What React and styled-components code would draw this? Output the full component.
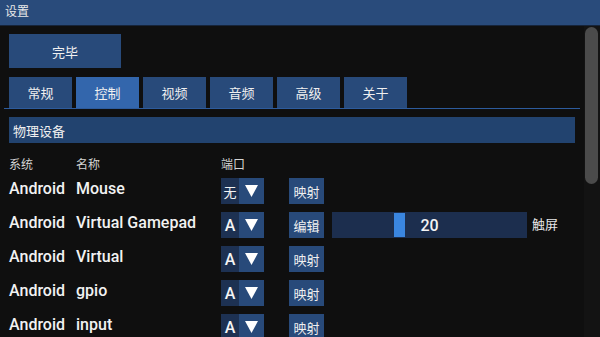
import React from "react";
import styled, { createGlobalStyle } from "styled-components";

const GlobalStyle = createGlobalStyle`
  html, body { margin: 0; padding: 0; background: #0f0f0f; }
  body { font-family: Roboto, "Noto Sans CJK SC", sans-serif; color: #eeeeee; }
`;

const Page = styled.div`
  width: 600px;
  height: 337px;
  overflow: hidden;
  display: flex;
  flex-direction: column;
  background: #0f0f0f;
`;

const TitleBar = styled.div`
  height: 25px;
  flex: none;
  background: #294b7b;
  border-bottom: 1px solid #16243a;
  padding-left: 5px;
  font-size: 12px;
  line-height: 25px;
  color: #e8e8e8;
`;

const Body = styled.div`
  flex: 1;
  display: flex;
  min-height: 0;
  overflow: hidden;
`;

const Content = styled.div`
  flex: 1;
  min-width: 0;
  padding: 8px 4px 0 9px;
  display: flex;
  flex-direction: column;
  & > * { flex: none; }
`;

const Track = styled.div`
  width: 16px;
  flex: none;
  background: #131313;
  padding: 1px 2px 0 1px;
  box-sizing: border-box;
`;

const Thumb = styled.div`
  width: 13px;
  height: 157px;
  border-radius: 7px;
  background: #4b4b4b;
`;

const DoneButton = styled.div`
  width: 112px;
  height: 34px;
  background: #284a7a;
  display: flex;
  align-items: center;
  justify-content: center;
  font-size: 13px;
  color: #f0f0f0;
`;

const TabStrip = styled.div`
  display: flex;
  gap: 4px;
  margin: 9px 0 0 -5px;
  padding-left: 5px;
  border-bottom: 1px solid #2d5b9c;
`;

const Tab = styled.div`
  width: 63px;
  height: 31px;
  background: ${(p) => (p.$active ? "#3366ac" : "#284a7a")};
  display: flex;
  align-items: center;
  justify-content: center;
  font-size: 13px;
  color: #f0f0f0;
`;

const SectionHeader = styled.div`
  margin: 8px 5px 0 0;
  height: 26px;
  background: #22436f;
  padding-left: 4px;
  display: flex;
  align-items: center;
  font-size: 13px;
  color: #f0f0f0;
`;

const cols = "67px 145px 68px 43px 200px auto";

const HeaderRow = styled.div`
  display: grid;
  grid-template-columns: ${cols};
  height: 20px;
  margin: 10px 0 5px;
  align-items: center;
  font-size: 12px;
  color: #d4d4d4;
`;

const DeviceRow = styled.div`
  display: grid;
  grid-template-columns: ${cols};
  height: 26px;
  margin-bottom: 8px;
  align-items: start;
`;

const Cell = styled.div`
  font-size: 16px;
  font-weight: 500;
  line-height: 22px;
  color: #f2f2f2;
  white-space: nowrap;
`;

const Dropdown = styled.div`
  width: 43px;
  height: 26px;
  display: flex;
`;

const DropValue = styled.div`
  width: 18px;
  background: #1d3152;
  display: flex;
  align-items: center;
  justify-content: center;
  font-size: ${(p) => (p.$cjk ? "13px" : "16px")};
  font-weight: ${(p) => (p.$cjk ? 400 : 500)};
  color: #f4f4f4;
`;

const DropArrow = styled.div`
  flex: 1;
  background: #284a7a;
  display: flex;
  align-items: center;
  justify-content: center;
`;

const SmallButton = styled.div`
  width: 35px;
  height: 26px;
  background: #284a7a;
  display: flex;
  align-items: center;
  justify-content: center;
  font-size: 13px;
  color: #f0f0f0;
`;

const Slider = styled.div`
  position: relative;
  width: 195px;
  height: 26px;
  background: #1c2e4e;
  display: flex;
  align-items: center;
  justify-content: center;
  font-size: 16px;
  font-weight: 500;
  color: #f4f4f4;
`;

const SliderKnob = styled.div`
  position: absolute;
  top: 1px;
  width: 11px;
  height: 24px;
  background: #3a86e0;
`;

const SideLabel = styled.div`
  font-size: 13px;
  line-height: 26px;
  color: #e6e6e6;
`;

const Arrow = () => (
  <svg width="13" height="12" viewBox="0 0 13 12">
    <polygon points="0,0 13,0 6.5,12" fill="#ffffff" />
  </svg>
);

const tabs = ["常规", "控制", "视频", "音频", "高级", "关于"];

const devices = [
  { sys: "Android", name: "Mouse", port: "无", action: "映射" },
  { sys: "Android", name: "Virtual Gamepad", port: "A", action: "编辑", slider: 20, label: "触屏" },
  { sys: "Android", name: "Virtual", port: "A", action: "映射" },
  { sys: "Android", name: "gpio", port: "A", action: "映射" },
  { sys: "Android", name: "input", port: "A", action: "映射" },
];

export default function App() {
  return (
    <>
      <GlobalStyle />
      <Page>
        <TitleBar>设置</TitleBar>
        <Body>
          <Content>
            <DoneButton>完毕</DoneButton>
            <TabStrip>
              {tabs.map((t, i) => (
                <Tab key={t} $active={i === 1}>
                  {t}
                </Tab>
              ))}
            </TabStrip>
            <SectionHeader>物理设备</SectionHeader>
            <HeaderRow>
              <div>系统</div>
              <div>名称</div>
              <div>端口</div>
            </HeaderRow>
            {devices.map((d, i) => (
              <DeviceRow key={i}>
                <Cell>{d.sys}</Cell>
                <Cell>{d.name}</Cell>
                <Dropdown>
                  <DropValue $cjk={d.port === "无"}>{d.port}</DropValue>
                  <DropArrow>
                    <Arrow />
                  </DropArrow>
                </Dropdown>
                <SmallButton>{d.action}</SmallButton>
                {d.slider !== undefined ? (
                  <>
                    <Slider>
                      <SliderKnob style={{ left: `${d.slider * 3.1}px` }} />
                      {d.slider}
                    </Slider>
                    <SideLabel>{d.label}</SideLabel>
                  </>
                ) : null}
              </DeviceRow>
            ))}
          </Content>
          <Track>
            <Thumb />
          </Track>
        </Body>
      </Page>
    </>
  );
}
